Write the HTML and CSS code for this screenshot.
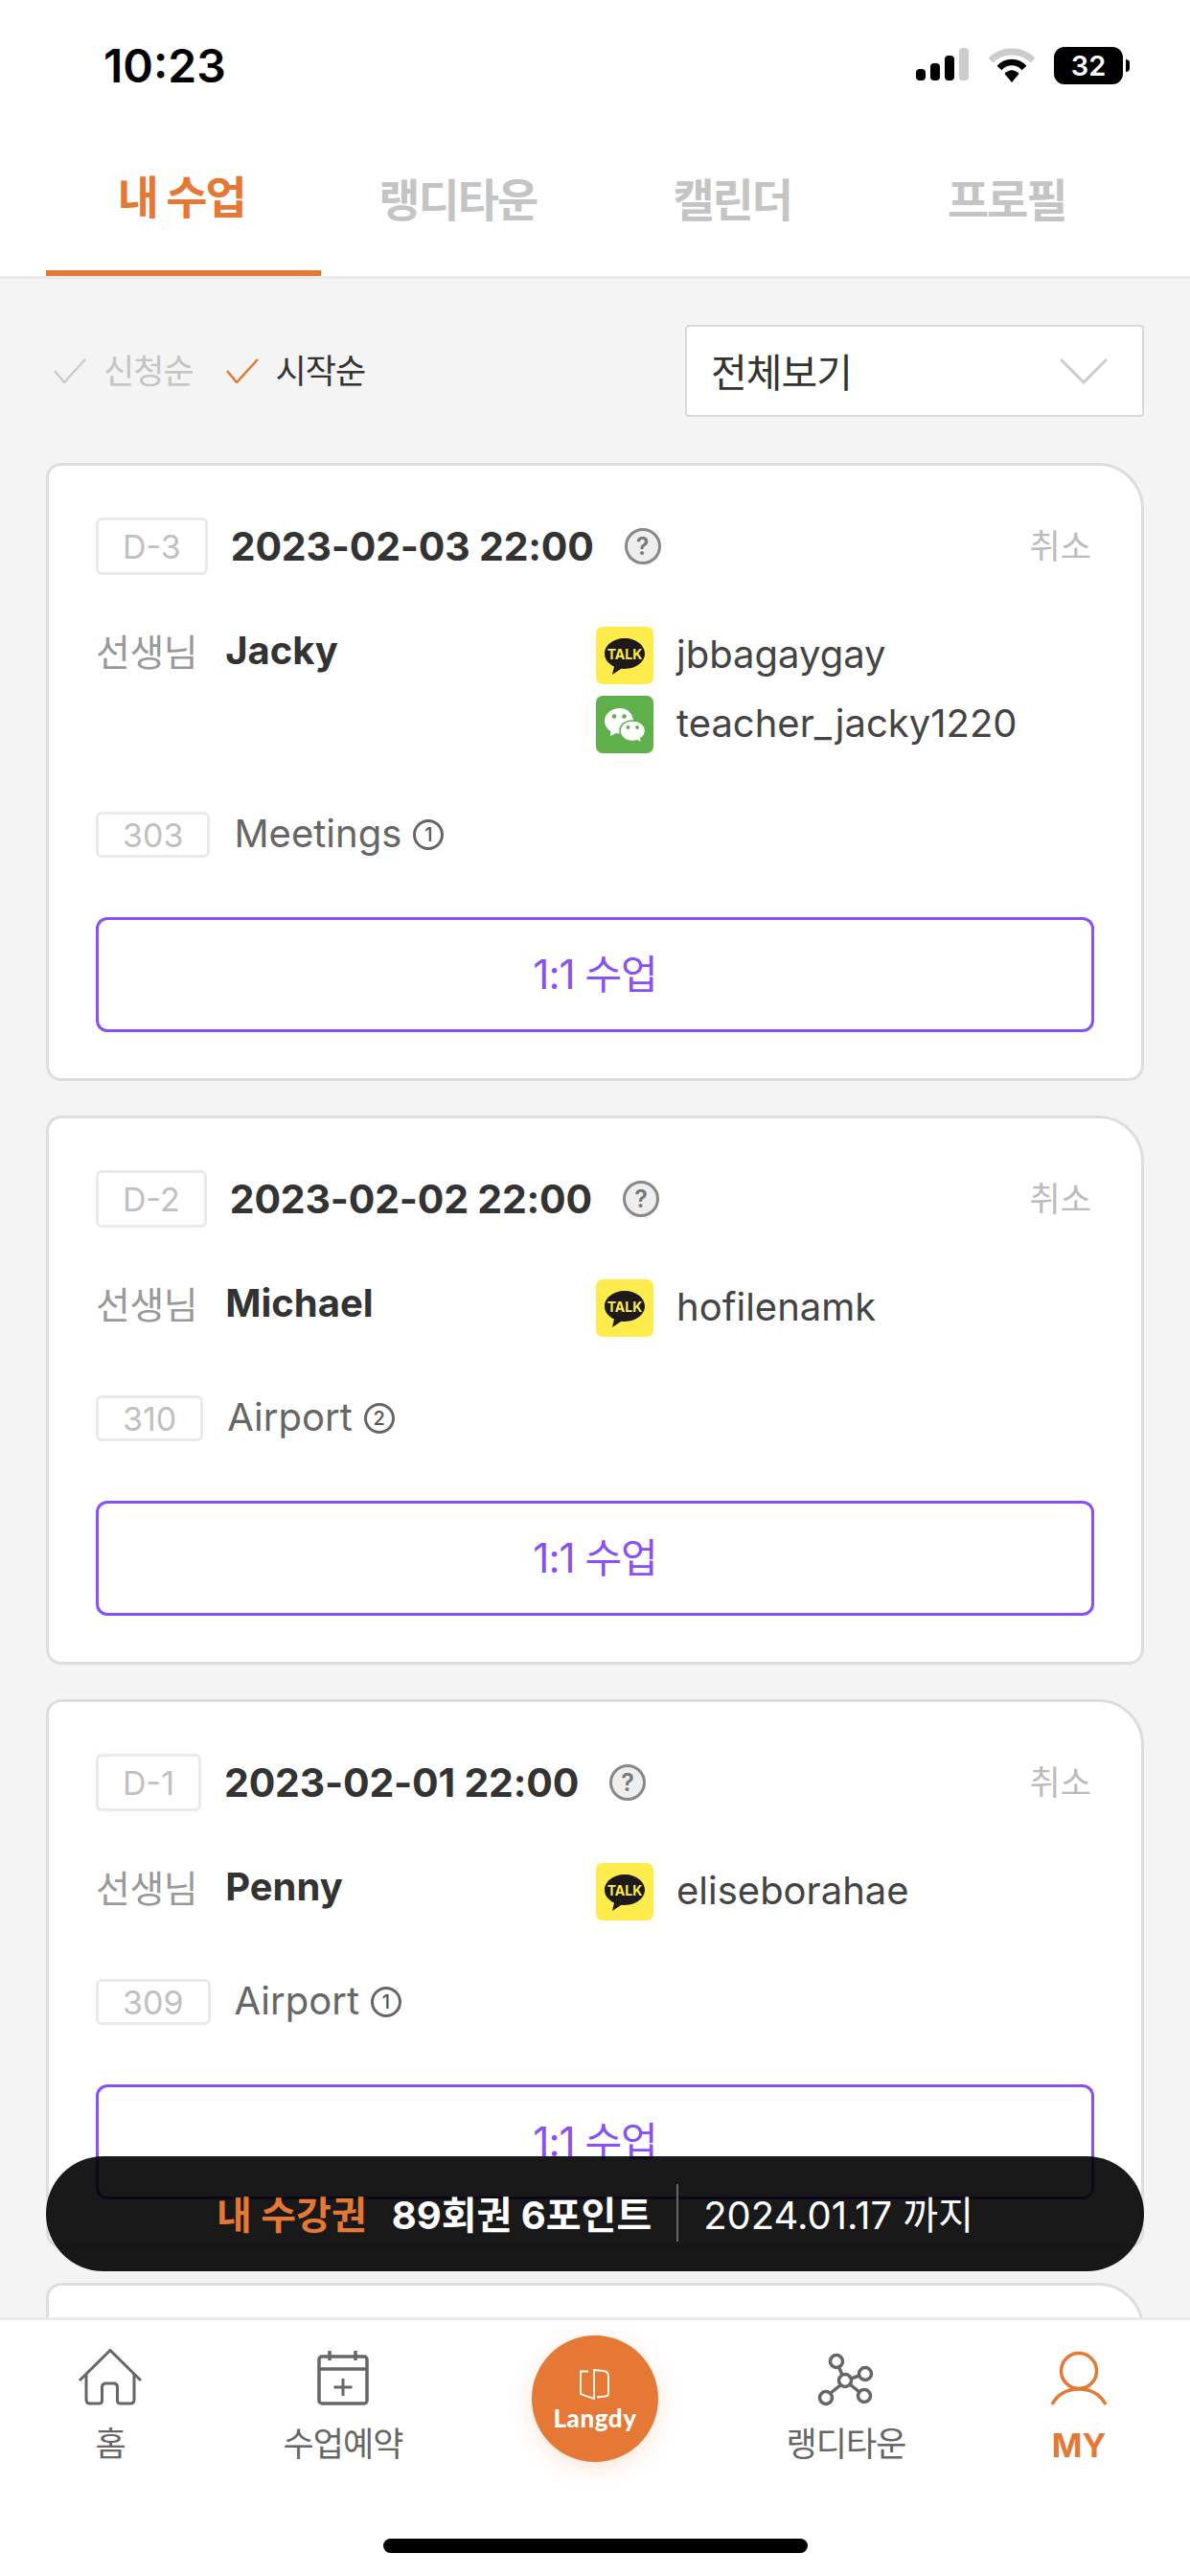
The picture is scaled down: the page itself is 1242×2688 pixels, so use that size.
FILE: index.html
```html
<!DOCTYPE html>
<html lang="ko">
<head>
	<meta charset="utf-8">
	<title>내 수업</title>
	<link rel="stylesheet" href="styles.css">
</head>
<body>
<div class="page">

	<header class="top">
		<div class="status">
			<span class="time">10:23</span>
			<div class="status-icons">
				<svg width="56" height="36" viewBox="0 0 56 36"><rect x="0" y="22" width="10" height="12" rx="4"/><rect x="15" y="16" width="10" height="18" rx="4"/><rect x="30" y="8" width="10" height="26" rx="4"/><rect x="45" y="0" width="10" height="34" rx="4" fill="#ccc"/></svg>
				<svg class="wifi" width="48" height="36" viewBox="0 0 48 36"><path d="M2 13 C14 1 34 1 46 13" fill="none" stroke="#ccc" stroke-width="7"/><path d="M11 21 C18 13 30 13 37 21" fill="none" stroke="#000" stroke-width="6.5"/><path d="M16.5 27 C21 22 27 22 31.5 27 L24 36 Z"/></svg>
				<div class="battery"><span>32</span></div>
				<i class="battery-nub"></i>
			</div>
		</div>
		<nav class="tabs">
			<a class="tab active">내 수업</a>
			<a class="tab">랭디타운</a>
			<a class="tab">캘린더</a>
			<a class="tab">프로필</a>
		</nav>
	</header>

	<main class="content">
		<div class="filter">
			<div class="sort">
				<svg class="check" width="34" height="26" viewBox="0 0 34 26"><path d="M1 13 L11 25 L33 1" fill="none" stroke="#ccc" stroke-width="2.5"/></svg>
				<span class="sort-off">신청순</span>
				<svg class="check" width="34" height="26" viewBox="0 0 34 26"><path d="M1 13 L11 25 L33 1" fill="none" stroke="#e57834" stroke-width="2.5"/></svg>
				<span class="sort-on">시작순</span>
			</div>
			<div class="select">
				<span>전체보기</span>
				<svg width="50" height="28" viewBox="0 0 50 28"><path d="M1 2 L25 26 L49 2" fill="none" stroke="#ccc" stroke-width="3"/></svg>
			</div>
		</div>

		<section class="card">
			<div class="card-head">
				<span class="badge badge-d">D-3</span>
				<b class="date">2023-02-03 22:00</b>
				<span class="help">?</span>
				<span class="cancel">취소</span>
			</div>
			<div class="teacher">
				<div class="teacher-name"><span>선생님</span><b>Jacky</b></div>
				<div class="contacts">
					<div class="contact">
						<svg class="app" viewBox="0 0 60 60"><rect width="60" height="60" rx="7" fill="#ffeb4b"/><path d="M30 12 C18.500 12 9 19.200 9 28 C9 34 13 38.800 19 41.500 L17 50 L26.500 43.700 C27.600 43.800 28.800 43.900 30 43.900 C41.500 43.900 51 36.800 51 28 C51 19.200 41.500 12 30 12 Z" fill="#1e1a1a"/><text x="30" y="33.500" class="talk">TALK</text></svg>
						<span>jbbagaygay</span>
					</div>
					<div class="contact">
						<svg class="app" viewBox="0 0 60 60"><rect width="60" height="60" rx="7" fill="#5fb04a"/><path d="M25 13 C15 13 9 19.500 9 26.500 C9 31 12 35 15.500 37 L15 42 L21 39 C23 39.500 25 39.800 27 39.700 C35 38 39 33 39 27 C39 19 33 13 25 13 Z" fill="#fff"/><path d="M38 26 C29.500 26 25 31.500 25 36.500 C25 42 30 47.500 38 47.500 C40 47.500 41.500 47.200 43 46.700 L47.500 49.500 L46.800 44.500 C50 42.500 51.500 39.500 51.500 36.500 C51.500 31 46.500 26 38 26 Z" fill="#fff" stroke="#5fb04a" stroke-width="1.500"/><circle cx="19" cy="21.500" r="2.300" fill="#5fb04a"/><circle cx="29.500" cy="21.500" r="2.300" fill="#5fb04a"/><circle cx="33.500" cy="33" r="1.900" fill="#5fb04a"/><circle cx="43" cy="33" r="1.900" fill="#5fb04a"/></svg>
						<span>teacher_jacky1220</span>
					</div>
				</div>
			</div>
			<div class="level">
				<span class="badge badge-l">303</span>
				<span class="level-name">Meetings</span>
				<span class="num">1</span>
			</div>
			<a class="join">1:1 수업</a>
		</section>

		<section class="card">
			<div class="card-head">
				<span class="badge badge-d">D-2</span>
				<b class="date">2023-02-02 22:00</b>
				<span class="help">?</span>
				<span class="cancel">취소</span>
			</div>
			<div class="teacher">
				<div class="teacher-name"><span>선생님</span><b>Michael</b></div>
				<div class="contacts">
					<div class="contact">
						<svg class="app" viewBox="0 0 60 60"><rect width="60" height="60" rx="7" fill="#ffeb4b"/><path d="M30 12 C18.500 12 9 19.200 9 28 C9 34 13 38.800 19 41.500 L17 50 L26.500 43.700 C27.600 43.800 28.800 43.900 30 43.900 C41.500 43.900 51 36.800 51 28 C51 19.200 41.500 12 30 12 Z" fill="#1e1a1a"/><text x="30" y="33.500" class="talk">TALK</text></svg>
						<span>hofilenamk</span>
					</div>
				</div>
			</div>
			<div class="level">
				<span class="badge badge-l">310</span>
				<span class="level-name">Airport</span>
				<span class="num">2</span>
			</div>
			<a class="join">1:1 수업</a>
		</section>

		<section class="card">
			<div class="card-head">
				<span class="badge badge-d">D-1</span>
				<b class="date">2023-02-01 22:00</b>
				<span class="help">?</span>
				<span class="cancel">취소</span>
			</div>
			<div class="teacher">
				<div class="teacher-name"><span>선생님</span><b>Penny</b></div>
				<div class="contacts">
					<div class="contact">
						<svg class="app" viewBox="0 0 60 60"><rect width="60" height="60" rx="7" fill="#ffeb4b"/><path d="M30 12 C18.500 12 9 19.200 9 28 C9 34 13 38.800 19 41.500 L17 50 L26.500 43.700 C27.600 43.800 28.800 43.900 30 43.900 C41.500 43.900 51 36.800 51 28 C51 19.200 41.500 12 30 12 Z" fill="#1e1a1a"/><text x="30" y="33.500" class="talk">TALK</text></svg>
						<span>eliseborahae</span>
					</div>
				</div>
			</div>
			<div class="level">
				<span class="badge badge-l">309</span>
				<span class="level-name">Airport</span>
				<span class="num">1</span>
			</div>
			<a class="join">1:1 수업</a>
		</section>

		<section class="card"></section>
	</main>

	<div class="ticket">
		<b class="ticket-label">내 수강권</b>
		<b class="ticket-count">89회권 6포인트</b>
		<i class="ticket-line"></i>
		<span class="ticket-date">2024.01.17 까지</span>
	</div>

	<footer class="bottom">
		<div class="bottom-nav">
			<a class="nav-item">
				<svg width="68" height="60" viewBox="0 0 68 60"><path d="M2 33 L34 1.500 L66 33" fill="none" stroke="#666" stroke-width="3"/><path d="M9 26 V53 Q9 57 13 57 H22 Q25.500 57 25.500 54 V40 Q25.500 36 29.500 36 H37.500 Q41.500 36 41.500 40 V54 Q41.500 57 45 57 H55 Q59 57 59 53 V26" fill="none" stroke="#666" stroke-width="3"/></svg>
				<span>홈</span>
			</a>
			<a class="nav-item">
				<svg width="54" height="60" viewBox="0 0 54 60"><g fill="none" stroke="#666" stroke-width="3.500"><rect x="2" y="8" width="50" height="49" rx="3"/><path d="M2 21 H52 M13 2 V12 M40 2 V12"/><path d="M27 31 V49 M17.500 40 H36.500" stroke-width="3"/></g></svg>
				<span>수업예약</span>
			</a>
			<a class="nav-item">
				<div class="logo">
					<svg width="36" height="36" viewBox="0 0 36 36"><path d="M11 3.500 H3 V27 L17 32 V2 L27 3 Q32 3.500 32 9 V27 Q32 29 29 29.500 L20 30.500" fill="none" stroke="#fff" stroke-width="1.800"/></svg>
					<span>Langdy</span>
				</div>
			</a>
			<a class="nav-item">
				<svg width="60" height="60" viewBox="0 0 60 60"><g fill="none" stroke="#666" stroke-width="3.500"><circle cx="20" cy="13" r="6.500"/><circle cx="50" cy="26" r="6.500"/><circle cx="29" cy="33" r="6.500"/><circle cx="9" cy="51" r="6.500"/><circle cx="49" cy="49" r="6.500"/><path d="M22.500 19 L26 27 M44 28 L35 31 M24 38 L14 46 M34 37 L44 45"/></g></svg>
				<span>랭디타운</span>
			</a>
			<a class="nav-item selected">
				<svg width="60" height="60" viewBox="0 0 60 60"><g fill="none" stroke="#e57834" stroke-width="3.500"><circle cx="30" cy="23" r="18.500"/><path d="M2 58 C8 47 18 42 30 42 C42 42 52 47 58 58"/></g></svg>
				<span>MY</span>
			</a>
		</div>
		<i class="home-bar"></i>
	</footer>

</div>
</body>
</html>
```

FILE: styles.css
```css
* {
	box-sizing: border-box;
}

html, body {
	margin: 0;
	padding: 0;
}

body {
	font-family: Inter, "Noto Sans CJK KR", sans-serif;
	color: #333;
}

b {
	font-weight: 700;
}

i {
	display: block;
}

.page {
	position: relative;
	display: flex;
	flex-direction: column;
	width: 1242px;
	height: 2688px;
	overflow: hidden;
	background: #f4f4f4;
}

/* status bar and tabs */
.top {
	flex: none;
	background: #fff;
	border-bottom: solid 3px #eaeaea;
}

.status {
	display: flex;
	justify-content: space-between;
	align-items: center;
	height: 136px;
	padding: 0 63px 0 108px;
}

.time {
	font-size: 48px;
	font-weight: 600;
	color: #000;
}

.status-icons {
	display: flex;
	align-items: center;
	gap: 20px;
}

.battery {
	display: flex;
	justify-content: center;
	align-items: center;
	width: 72px;
	height: 39px;
	border-radius: 11px;
	background: #000;
	color: #fff;
	font-size: 29px;
	font-weight: 600;
}

.battery-nub {
	width: 4px;
	height: 13px;
	margin-left: -17px;
	border-radius: 0 4px 4px 0;
	background: #000;
}

.tabs {
	display: grid;
	grid-template-columns: repeat(4, 286.500px);
	height: 152px;
	padding-left: 48px;
}

.tab {
	display: flex;
	justify-content: center;
	padding-top: 35px;
	font-size: 47px;
	font-weight: 700;
	letter-spacing: -2px;
	color: #c4c4c4;
}

.tab.active {
	padding-top: 32px;
	padding-right: 4px;
	color: #e57834;
	border-bottom: solid 6px #e57834;
}

/* filter row */
.content {
	flex: 1;
	min-height: 0;
	overflow: hidden;
	padding: 0 48px;
}

.filter {
	display: flex;
	justify-content: space-between;
	align-items: center;
	padding: 48px 0;
}

.sort {
	display: flex;
	align-items: center;
	padding-left: 8px;
	font-size: 35px;
	letter-spacing: -1px;
}

.sort span {
	padding-bottom: 5px;
}

.sort .check {
	margin-right: 18px;
}

.sort-off {
	margin-right: 34px;
	color: #c4c4c4;
}

.sort-on {
	color: #333;
}

.select {
	display: flex;
	justify-content: space-between;
	align-items: center;
	width: 479px;
	height: 96px;
	padding: 0 36px 0 25px;
	background: #fff;
	border: solid 2px #d9d9d9;
	border-radius: 4px;
	font-size: 41px;
	letter-spacing: -1px;
}

.select span {
	padding-bottom: 3px;
}

/* class cards */
.card {
	margin-bottom: 36px;
	padding: 54px 49px 48px;
	background: #fff;
	border: solid 3px #ddd;
	border-radius: 16px 48px 16px 16px;
}

.card-head {
	display: flex;
	align-items: center;
	height: 60px;
}

.badge {
	display: flex;
	justify-content: center;
	align-items: center;
	border: solid 3px #eaeaea;
	border-radius: 6px;
	font-size: 34px;
	color: #c0c0c0;
}

.badge-d {
	height: 60px;
	padding: 0 25px;
}

.date {
	margin-left: 24px;
	font-size: 41px;
	letter-spacing: -0.200px;
	color: #333;
}

.help {
	display: flex;
	justify-content: center;
	align-items: center;
	width: 38px;
	height: 38px;
	margin-left: 32px;
	background: #eee;
	border: solid 3px #888;
	border-radius: 50%;
	font-size: 25px;
	font-weight: 600;
	color: #777;
}

.cancel {
	margin-left: auto;
	padding-right: 3px;
	padding-bottom: 6px;
	font-size: 35px;
	color: #bbb;
}

.teacher {
	display: flex;
	align-items: flex-start;
	margin-top: 54px;
}

.teacher-name {
	display: flex;
	align-items: center;
	gap: 29px;
	width: 522px;
	height: 48px;
	font-size: 39px;
	letter-spacing: -0.500px;
	color: #999;
}

.teacher-name b {
	font-size: 40px;
	letter-spacing: 0;
	color: #333;
}

.contacts {
	display: flex;
	flex-direction: column;
	gap: 12px;
}

.contact {
	display: flex;
	align-items: center;
	gap: 24px;
	height: 60px;
	font-size: 40px;
	color: #444;
}

.contact span {
	padding-bottom: 4px;
}

.app {
	width: 60px;
	height: 60px;
}

.talk {
	font-family: Inter, sans-serif;
	font-size: 14px;
	font-weight: 700;
	text-anchor: middle;
	fill: #ffeb4b;
}

.level {
	display: flex;
	align-items: center;
	height: 48px;
	margin-top: 61px;
}

.badge-l {
	height: 48px;
	padding: 0 25px;
}

.level-name {
	margin-left: 25px;
	padding-bottom: 4px;
	font-size: 40px;
	color: #666;
}

.num {
	display: flex;
	justify-content: center;
	align-items: center;
	width: 32px;
	height: 32px;
	margin-left: 12px;
	border: solid 3px #666;
	border-radius: 50%;
	font-size: 20px;
	font-weight: 500;
	color: #555;
}

.join {
	display: flex;
	justify-content: center;
	align-items: center;
	height: 120px;
	margin-top: 62px;
	padding-bottom: 8px;
	border: solid 3px #8950f7;
	border-radius: 12px;
	font-size: 42px;
	letter-spacing: -1px;
	color: #8950f7;
}

/* floating ticket bar */
.ticket {
	position: absolute;
	left: 48px;
	bottom: 318px;
	display: flex;
	justify-content: center;
	align-items: center;
	width: 1146px;
	height: 120px;
	padding-bottom: 2px;
	border-radius: 60px;
	background: rgba(0, 0, 0, 0.9);
	color: #fff;
	font-size: 40px;
}

.ticket-label {
	margin-right: 26px;
	color: #e57834;
}

.ticket-line {
	width: 2px;
	height: 60px;
	margin: 0 26px;
	background: #666;
}

/* bottom navigation */
.bottom {
	flex: none;
	display: flex;
	flex-direction: column;
	justify-content: space-between;
	align-items: center;
	height: 270px;
	padding-bottom: 24px;
	background: #fff;
	border-top: solid 3px #eaeaea;
}

.bottom-nav {
	display: grid;
	grid-template-columns: 230px 256px 270px 254px 232px;
	width: 100%;
}

.nav-item {
	display: flex;
	flex-direction: column;
	align-items: center;
	padding-top: 30px;
	font-size: 35px;
	letter-spacing: -1px;
	line-height: 50px;
	color: #666;
}

.nav-item svg {
	margin-bottom: 14px;
}

.nav-item.selected {
	font-size: 34px;
	font-weight: 700;
	letter-spacing: 0;
	color: #e57834;
}

.nav-item.selected svg {
	margin-bottom: 16px;
}

.logo {
	display: flex;
	flex-direction: column;
	align-items: center;
	width: 132px;
	height: 132px;
	margin-top: -14px;
	padding-top: 34px;
	border-radius: 50%;
	background: #e57834;
	box-shadow: 0 6px 24px rgba(229, 120, 52, 0.2);
	color: #fff;
}

.nav-item .logo svg {
	margin-bottom: 0;
}

.logo span {
	font-family: Lato, sans-serif;
	font-size: 26px;
	font-weight: 900;
	line-height: 32px;
	letter-spacing: 0.500px;
}

.home-bar {
	width: 443px;
	height: 15px;
	border-radius: 8px;
	background: #000;
}
```
